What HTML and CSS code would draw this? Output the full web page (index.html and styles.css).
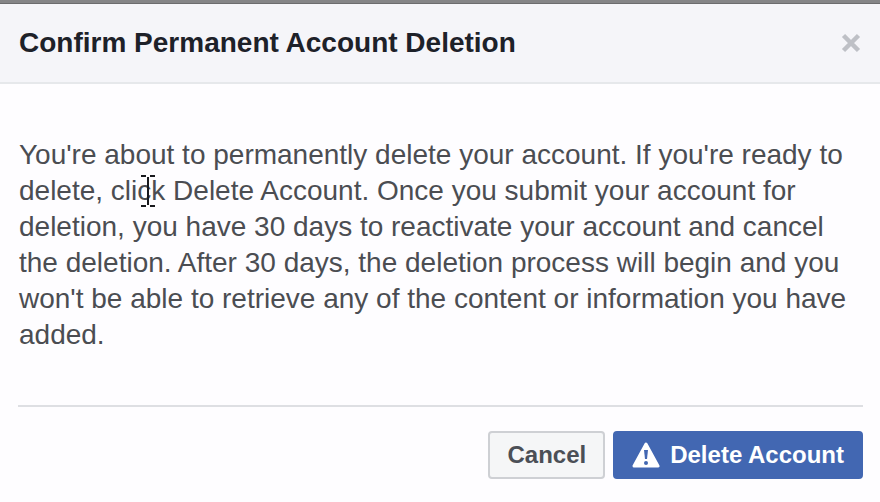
FILE: index.html
```
<!DOCTYPE html>
<html lang="en">
<head>
  <meta charset="UTF-8" />
  <meta name="viewport" content="width=device-width, initial-scale=1" />
  <title>Confirm Permanent Account Deletion</title>
  <link rel="stylesheet" href="styles.css">
</head>
<body>
  <div class="backdrop"></div>
  <div class="dialog" role="dialog" aria-labelledby="dialogTitle">
    <div class="dialog-header">
      <h1 id="dialogTitle">Confirm Permanent Account Deletion</h1>
      <button class="close-btn" aria-label="Close">
        <svg width="20" height="20" viewBox="0 0 20 20"><path d="M2.500 2.500L17.500 17.500M17.500 2.500L2.500 17.500" stroke="#bec0c6" stroke-width="4.500" stroke-linecap="butt" /></svg>
      </button>
    </div>

    <p class="dialog-text">You're about to permanently delete your account. If you're ready to delete, <span class="pointed">click<svg class="cursor" width="16" height="34" viewBox="0 0 16 34"><path d="M1 2H6M10 2H15M8 3V31M1 32H6M10 32H15" fill="none" stroke="#18191d" stroke-width="2" /></svg></span> Delete Account. Once you submit your account for deletion, you have 30 days to reactivate your account and cancel the deletion. After 30 days, the deletion process will begin and you won't be able to retrieve any of the content or information you have added.</p>

    <div class="dialog-footer">
      <button class="btn">Cancel</button>
      <button class="btn btn-primary">
        <svg width="28" height="26" viewBox="0 0 28 26">
          <path d="M14 2L26 24H2Z" fill="#fff" stroke="#fff" stroke-width="3" stroke-linejoin="round" />
          <path d="M12 8H16L15 17H13Z" fill="#4267b2" />
          <circle cx="14" cy="21" r="2" fill="#4267b2" />
        </svg>
        Delete Account
      </button>
    </div>
  </div>
</body>
</html>
```

FILE: styles.css
```
body {
  margin: 0;
  font-family: "Liberation Sans", Arial, sans-serif;
  background: #fefdff;
  color: #4b4d52;
}

.backdrop {
  height: 3px;
  background: #858587;
  border-bottom: 1px solid #6c6c6e;
}

.dialog-header {
  display: flex;
  justify-content: space-between;
  align-items: center;
  height: 78px;
  padding: 0 19px;
  background: #f5f5f9;
  border-bottom: 2px solid #e6e8eb;
}

h1 {
  margin: 0;
  font-size: 28px;
  line-height: 36px;
  color: #1d2129;
}

button {
  font-family: inherit;
  cursor: pointer;
}

.close-btn {
  display: flex;
  padding: 0;
  border: none;
  background: none;
}

.dialog-text {
  margin: 0;
  padding: 53px 19px 52px;
  font-size: 28px;
  line-height: 36px;
}

.pointed {
  position: relative;
}

.cursor {
  position: absolute;
  right: 9px;
  top: -1px;
}

.dialog-footer {
  display: flex;
  justify-content: flex-end;
  gap: 8px;
  margin: 0 17px 0 18px;
  padding: 24px 0 20px;
  border-top: 2px solid #dedfe3;
}

.btn {
  display: flex;
  align-items: center;
  gap: 10px;
  height: 48px;
  padding: 0 17px;
  border: 2px solid #ced0d4;
  border-radius: 4px;
  background: #f5f6f7;
  color: #4b4f56;
  font-size: 24px;
  font-weight: bold;
}

.btn-primary {
  background: #4267b2;
  border-color: #4267b2;
  color: #fff;
}
```
